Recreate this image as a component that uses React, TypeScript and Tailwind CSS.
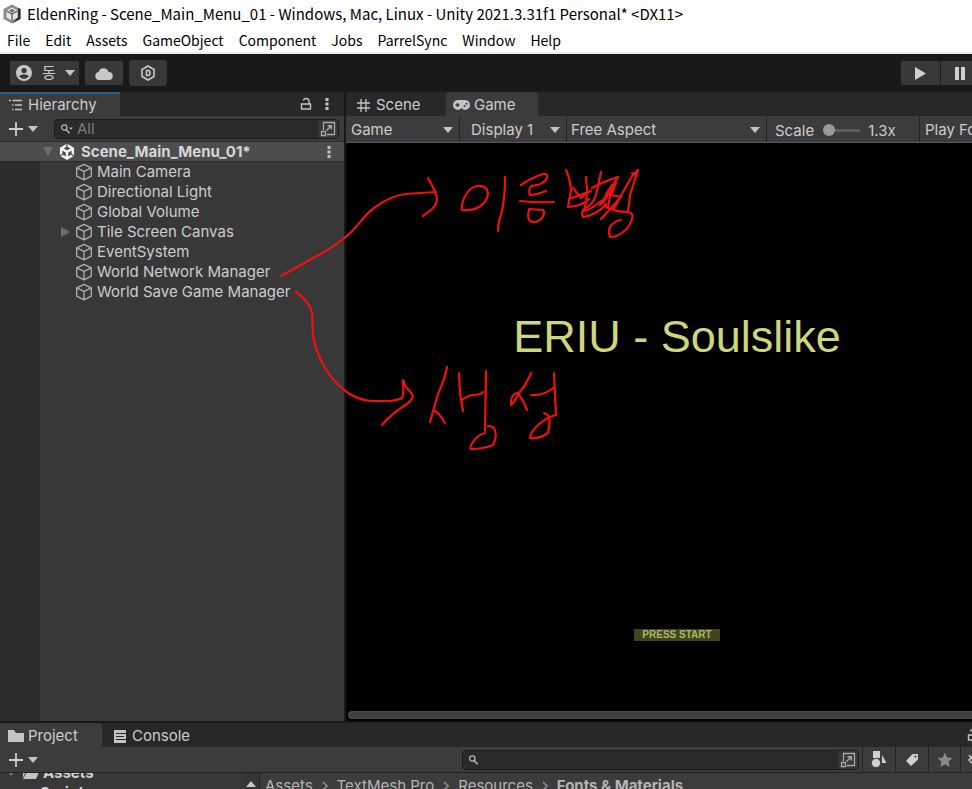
import type { ReactNode } from "react";
import { SiUnity } from "react-icons/si";

const menus = ["File", "Edit", "Assets", "GameObject", "Component", "Jobs", "ParrelSync", "Window", "Help"];

const objects = [
  { name: "Main Camera" },
  { name: "Directional Light" },
  { name: "Global Volume" },
  { name: "Tile Screen Canvas", children: true },
  { name: "EventSystem" },
  { name: "World Network Manager" },
  { name: "World Save Game Manager" },
];

const crumbs = ["Assets", "TextMesh Pro", "Resources"];

function Caret({ className = "" }: { className?: string }) {
  return (
    <svg viewBox="0 0 10 6" className={`h-[6px] w-[10px] shrink-0 fill-[#c4c4c4] ${className}`} aria-hidden="true">
      <path d="M0 0h10L5 6z" />
    </svg>
  );
}

function Dots() {
  return (
    <svg viewBox="0 0 4 14" className="h-[14px] w-1 fill-[#c4c4c4]" aria-hidden="true">
      <rect x="0.5" y="1" width="3" height="3" />
      <rect x="0.5" y="5.5" width="3" height="3" />
      <rect x="0.5" y="10" width="3" height="3" />
    </svg>
  );
}

function Lock() {
  return (
    <svg viewBox="0 0 12 14" className="h-[14px] w-3 shrink-0 fill-none stroke-[#c4c4c4]" strokeWidth="1.4" aria-hidden="true">
      <path d="M1.500 7h9v5h-9zM9 7V4.200Q9 1.500 6.300 1.500Q3.800 1.500 3.500 3.500" />
    </svg>
  );
}

function Plus() {
  return (
    <svg viewBox="0 0 16 16" className="size-4 stroke-[#cdcdcd]" strokeWidth="1.800" aria-hidden="true">
      <path d="M8 1v14M1 8h14" />
    </svg>
  );
}

function Popout() {
  return (
    <svg viewBox="0 0 16 16" className="size-4 fill-none stroke-[#a8a8a8]" strokeWidth="1.300" aria-hidden="true">
      <path d="M3.500 9V1.500h11v12H7M1.500 10.500h4v4h-4z" />
      <path d="M6.500 9.500 11 5M7.500 4.700h3.800v3.800" strokeWidth="1.500" />
    </svg>
  );
}

function Cube() {
  return (
    <svg viewBox="0 0 18 18" className="size-[18px] shrink-0 fill-none stroke-[#b0b0b0]" strokeWidth="1.300" strokeLinejoin="round" aria-hidden="true">
      <path d="M9 1.300 16.300 4.800v8.400L9 16.800 1.700 13.200V4.800zM1.700 4.800 9 8.300l7.300-3.500M9 8.300v8.500" />
    </svg>
  );
}

function Search({ menu = false }: { menu?: boolean }) {
  return (
    <svg viewBox="0 0 14 12" className="h-3 w-[14px] shrink-0 fill-none stroke-[#b4b4b4]" strokeWidth="1.300" aria-hidden="true">
      <circle cx="4.300" cy="4.500" r="2.700" />
      <path d="m6.300 6.700 3.300 3.600" strokeWidth="1.600" />
      {menu && <path d="M9 4.500h4l-2 2.300z" fill="#b4b4b4" stroke="none" />}
    </svg>
  );
}

function AddButton() {
  return (
    <button type="button" aria-label="Create" className="flex items-center gap-1">
      <Plus />
      <Caret />
    </button>
  );
}

function Tab({ active = false, className = "", children }: { active?: boolean; className?: string; children: ReactNode }) {
  return (
    <button
      type="button"
      role="tab"
      aria-selected={active}
      className={`flex h-full items-center ${active ? "bg-[#3c3c3c]" : ""} ${className}`}
    >
      {children}
    </button>
  );
}

function DropButton({ className = "", children }: { className?: string; children: ReactNode }) {
  return (
    <button type="button" className={`flex h-full shrink-0 items-center justify-between border-r border-[#232323] pt-0.5 ${className}`}>
      {children}
      <Caret />
    </button>
  );
}

function Hierarchy() {
  return (
    <section className="flex w-[344px] shrink-0 flex-col bg-[#383838]">
      <div role="tablist" className="flex h-6 shrink-0 items-center bg-[#282828]">
        <Tab active className="w-[120px] gap-1.5 border-t-2 border-[#2c5d87] pl-[9px]">
          <svg viewBox="0 0 13 12" className="h-3 w-[13px] stroke-[#c4c4c4]" strokeWidth="1.300" aria-hidden="true">
            <path d="M0 1.500h2M3.500 1.500H13M3 6h1.500M6 6h7M3 10.500h1.500M6 10.500h7" />
          </svg>
          Hierarchy
        </Tab>
        <div className="ml-auto flex items-center gap-[13px] pr-[15px]">
          <button type="button" aria-label="Lock"><Lock /></button>
          <button type="button" aria-label="Hierarchy options"><Dots /></button>
        </div>
      </div>
      <div className="flex h-[25px] shrink-0 items-center gap-4 bg-[#3c3c3c] pr-[5px] pl-2">
        <AddButton />
        <div className="flex h-5 flex-1 items-center overflow-hidden rounded border border-[#1c1c1c] bg-[#2a2a2a] pl-[5px]">
          <Search menu />
          <input aria-label="Search hierarchy" placeholder="All" className="min-w-0 flex-1 bg-transparent pl-[3px] outline-none placeholder:text-[#7d7d7d]" />
          <button type="button" aria-label="Open search" className="flex h-full w-5 items-center justify-center bg-[#373737]"><Popout /></button>
        </div>
      </div>
      <div className="flex h-[21px] shrink-0 items-center border-y border-[#2b2b2b] bg-[#4d4d4d] pr-[13px] pl-[43px] font-bold text-[#d6d6d6]">
        <svg viewBox="0 0 10 9" className="mr-1.5 h-[9px] w-[10px] fill-[#6e6e6e]" aria-hidden="true"><path d="M0 0h10L5 9z" /></svg>
        <SiUnity className="size-4 shrink-0 text-[#f0f0f0]" aria-hidden="true" />
        <span className="ml-1.5">Scene_Main_Menu_01*</span>
        <button type="button" aria-label="Scene options" className="ml-auto"><Dots /></button>
      </div>
      <div className="flex flex-1">
        <div className="w-10 shrink-0 bg-[#2d2d2d]" />
        <ul className="flex-1">
          {objects.map((o) => (
            <li key={o.name} className="flex h-5 items-center pl-[21px]">
              <svg viewBox="0 0 9 10" className={`mr-[5px] h-[10px] w-[9px] ${o.children ? "fill-[#6e6e6e]" : "fill-none"}`} aria-hidden="true"><path d="M0 0v10l9-5z" /></svg>
              <Cube />
              <span className="ml-1 whitespace-nowrap">{o.name}</span>
            </li>
          ))}
        </ul>
      </div>
    </section>
  );
}

function GameView() {
  return (
    <section className="flex min-w-0 flex-1 flex-col bg-black">
      <div role="tablist" className="flex h-6 shrink-0 items-center bg-[#282828]">
        <Tab className="w-[100px] gap-1.5 pt-0.5 pl-[11px]">
          <svg viewBox="0 0 13 13" className="size-[13px] stroke-[#c4c4c4]" strokeWidth="1.300" aria-hidden="true">
            <path d="M4 0v13M9 0v13M0 4h13M0 9h13" />
          </svg>
          Scene
        </Tab>
        <Tab active className="w-[92px] gap-1 rounded-t pt-0.5 pl-[7px]">
          <svg viewBox="0 0 17 10" className="h-[10px] w-[17px]" aria-hidden="true">
            <path d="M5 0h7a5 5 0 0 1 0 10Q10.500 10 9.500 8.500h-2Q6.500 10 5 10A5 5 0 0 1 5 0z" fill="#c4c4c4" />
            <path d="M2.500 5h4M4.500 3v4" stroke="#333" strokeWidth="1.300" />
            <circle cx="11.500" cy="6" r="1" fill="#333" />
            <circle cx="13.500" cy="3.800" r="1" fill="#333" />
          </svg>
          Game
        </Tab>
      </div>
      <div className="flex h-[27px] shrink-0 items-center overflow-hidden border-b border-[#4a5c6c] bg-[#3c3c3c] whitespace-nowrap">
        <DropButton className="w-[114px] pr-1.5 pl-[5px]">Game</DropButton>
        <DropButton className="w-[107px] pr-1.5 pl-[11px]">Display 1</DropButton>
        <DropButton className="w-[200px] pr-1.5 pl-1">Free Aspect</DropButton>
        <label className="flex h-full w-[153px] shrink-0 items-center border-r border-[#232323] pt-[3px] pl-2">
          Scale
          <input
            type="range"
            min="1"
            max="5"
            step="0.1"
            defaultValue="1"
            className="mr-2 ml-[9px] h-3 w-[37px] appearance-none bg-transparent [&::-webkit-slider-runnable-track]:h-[3px] [&::-webkit-slider-runnable-track]:bg-[#5e5e5e] [&::-webkit-slider-thumb]:-mt-[5px] [&::-webkit-slider-thumb]:size-3 [&::-webkit-slider-thumb]:appearance-none [&::-webkit-slider-thumb]:rounded-full [&::-webkit-slider-thumb]:bg-[#999]"
          />
          1.3x
        </label>
        <button type="button" className="h-full shrink-0 pt-0.5 pl-[5px]">Play Focused</button>
      </div>
      <div className="flex flex-1 flex-col items-center overflow-hidden font-['Liberation_Sans',Arial,sans-serif]">
        <h1 className="mt-[168px] ml-9 text-[45px] leading-[52px] whitespace-nowrap text-[#cdd67c]">ERIU - Soulslike</h1>
        <button type="button" className="mt-[266px] ml-9 h-3 w-[86px] bg-[#41451f] text-[10px] leading-3 font-bold whitespace-nowrap text-[#b0b764]">PRESS START</button>
      </div>
      <div className="h-[10px] shrink-0 pl-0.5">
        <div className="h-2 rounded-l-full border border-r-0 border-[#4a4a4a] bg-[#404040]" />
      </div>
    </section>
  );
}

function Project() {
  return (
    <section className="flex h-[67px] shrink-0 flex-col overflow-hidden border-t border-[#191919] bg-[#383838]">
      <div role="tablist" className="flex h-6 shrink-0 items-center bg-[#282828]">
        <Tab active className="w-[102px] gap-1 rounded-tr pt-0.5 pl-2">
          <svg viewBox="0 0 16 12" className="h-3 w-4 fill-[#c4c4c4]" aria-hidden="true"><path d="M0 0h6l2 3h8v9H0z" /></svg>
          Project
        </Tab>
        <Tab className="gap-1.5 pt-0.5 pl-3">
          <svg viewBox="0 0 12 13" className="h-[13px] w-3" aria-hidden="true">
            <path d="M0 0h12v13H0z" fill="#c4c4c4" />
            <path d="M2 3.500h10M2 6.500h8M2 9.500h10" stroke="#282828" strokeWidth="1.200" />
          </svg>
          Console
        </Tab>
        <button type="button" aria-label="Lock" className="ml-auto w-[5px] overflow-hidden"><Lock /></button>
      </div>
      <div className="flex h-[26px] shrink-0 items-center border-b border-[#232323] bg-[#3c3c3c] pl-2">
        <AddButton />
        <div className="ml-auto flex h-5 w-[397px] items-center overflow-hidden rounded border border-[#1c1c1c] bg-[#2a2a2a] pl-[5px]">
          <Search />
          <input aria-label="Search project" className="min-w-0 flex-1 bg-transparent outline-none" />
          <button type="button" aria-label="Open search" className="flex h-full w-5 items-center justify-center bg-[#373737]"><Popout /></button>
        </div>
        <div className="ml-[3px] flex h-full">
          <button type="button" aria-label="Filter by type" className="flex w-[33px] items-center justify-center border-l border-[#232323]">
            <svg viewBox="0 0 16 17" className="h-[17px] w-4 fill-[#d0d0d0]" aria-hidden="true"><path d="M2 0h7v7H2zM11 4l4.500 8H11z" /><circle cx="5" cy="12" r="4.600" stroke="#3c3c3c" strokeWidth="0.800" /></svg>
          </button>
          <button type="button" aria-label="Filter by label" className="flex w-[33px] items-center justify-center border-l border-[#232323]">
            <svg viewBox="0 0 14 14" className="size-[14px]" aria-hidden="true"><path d="m1 8 6-6.500Q7.500 1 8.500 1H12q1 0 1 1v3.500Q13 6.500 12.500 7L6 13z" fill="#d0d0d0" /><circle cx="10.500" cy="3.500" r="1.100" fill="#3c3c3c" /></svg>
          </button>
          <button type="button" aria-label="Favorites" className="flex w-8 items-center justify-center border-l border-[#232323]">
            <svg viewBox="0 0 16 16" className="size-4 fill-[#8a8a8a]" aria-hidden="true"><path d="m8 .500 2.200 5 5.300.5-4 3.600 1.200 5.400L8 12.200 3.300 15l1.200-5.400-4-3.600 5.300-.500z" /></svg>
          </button>
          <button type="button" aria-label="Hidden packages" className="flex w-3 items-center overflow-hidden border-l border-[#232323] pl-[7px]">
            <svg viewBox="0 0 16 12" className="h-3 w-4 shrink-0 fill-none stroke-[#c4c4c4]" strokeWidth="1.500" aria-hidden="true"><path d="M1 6q7-9 14 0-7 9-14 0zM1 1l10 11" /></svg>
          </button>
        </div>
      </div>
      <div className="flex min-h-0 flex-1">
        <div className="flex w-[242px] shrink-0 flex-col justify-end overflow-hidden font-bold text-[#d2d2d2]">
          <div className="-mb-[14px]">
            <div className="flex h-5 items-center pl-1.5">
              <Caret className="opacity-40" />
              <svg viewBox="0 0 17 12" className="mr-1 ml-1.5 h-3 w-[17px] fill-[#c4c4c4]" aria-hidden="true"><path d="M1 0h5l2 2h6v2H4L1 11zM5 5h12l-3 7H1z" /></svg>
              Assets
            </div>
            <div className="flex h-5 items-center pl-10">Scripts</div>
          </div>
        </div>
        <div className="flex w-[18px] shrink-0 justify-center border-r border-[#232323] bg-[#353535] pt-2">
          <svg viewBox="0 0 10 6" className="h-[6px] w-[10px] fill-[#c4c4c4]" aria-hidden="true"><path d="M0 6h10L5 0z" /></svg>
        </div>
        <nav aria-label="Folder path" className="flex h-[25px] flex-1 items-center gap-[9px] bg-[#3c3c3c] pl-[5px] text-[#b4b4b4]">
          {crumbs.map((c) => (
            <span key={c} className="flex items-center gap-[9px] whitespace-nowrap">
              <a href="#folder">{c}</a>
              <svg viewBox="0 0 6 10" className="h-[10px] w-[6px] fill-none stroke-[#8a8a8a]" strokeWidth="1.600" aria-hidden="true"><path d="m1 1 4 4-4 4" /></svg>
            </span>
          ))}
          <a href="#folder" className="font-bold whitespace-nowrap">Fonts &amp; Materials</a>
        </nav>
      </div>
    </section>
  );
}

function Annotations() {
  return (
    <svg viewBox="0 0 400 320" className="pointer-events-none absolute top-[150px] left-[270px] h-[320px] w-[400px] fill-none stroke-[#f01010]" strokeWidth="2.200" strokeLinecap="round" strokeLinejoin="round" role="img" aria-label="이름변경, 생성">
      <path d="M11 126 45 107Q66 96 79 84C91 73 94 65 104 58Q120 46 135 44Q150 43 166 42" />
      <path d="M158 28q5 9 7 14 5 10-3 17-5 4-9 7" />
      <path d="M207 36q-7 2-10 7-6 9-5 17 10 1 17-3 9-6 9-14-1-8-11-7M235 27q0 20-3 34-4 12-4 20" />
      <path d="M251 35q10-7 22-11 5-1 4 4-3 7-16 8-3 5-1 9 6 0 16-4M250 51q18 2 34 1M259 60q-2 7 1 11 6 3 11-2 5-6 2-9l-14-1" />
      <path d="M296 20q4 8 5 21l-3 16q14-1 21-8M316 27l1 14q0 10-3 20 8-2 17-10M303 38l8 10 6-6M299 49l22-8M331 22l-5 23q-3 10-12 14-3 4-1 8 14-2 23-13M322 38l10-5q9-4 16-6l-18 28M333 53l15-26M336 44l6-9-4 22M346 33l-5 12 10 2-20 22M343 60l19-34 6-6-8 25-2 17q-12 0-22-5M362 23l5 3" />
      <path d="M358 62q6 1 4 7-2 8-9 13-6 5-13 5-2-5 0-10 4-6 11-7" />
      <g transform="translate(0 100)">
        <path d="M26 42Q40 52 42 63L43 85Q45 100 55 118Q65 134 78 143Q89 150 101 151H120Q129 150 132 148Q134 146 133 130L136 137Q140 141 143 146Q142 151 134 156Q120 165 112 175" />
        <path d="M177 117q-2 12-9 27l-8 28M165 161q4 2 10 12M189 123l1 20 3 18M192 150q6-5 12-5t9-3M216 121l-1 60M215 183q-8 2-12 9-4 6-2 7 13 0 22-4 5-10 1-17-2-2-6-2" />
        <path d="M261 123q-5 12-12 20-5 10-8 12-1-10 6-12 4 2 10 17M261 145q13 1 22-7M284 123l2 42q-9 2-18 10-8 8-8 13 10 1 18-5 3-15 0-18l-4-2" />
      </g>
    </svg>
  );
}

export default function App() {
  return (
    <div className="relative flex min-h-screen flex-col overflow-hidden bg-[#191919] font-['Inter','Noto_Sans_CJK_KR',sans-serif] text-[15px] leading-5 text-[#cdcdcd]">
      <header className="border-b-2 border-[#ececec] bg-white font-['Noto_Sans_CJK_KR','Noto_Sans',sans-serif] text-black">
        <div className="flex h-7 items-center gap-1.5 pl-[3px] whitespace-nowrap">
          <svg viewBox="0 0 18 20" className="h-5 w-[18px]" aria-hidden="true">
            <path d="M9 .500 17.500 5v10L9 19.500.500 15V5z" fill="#8c8c8c" />
            <path d="M9 19.500 17.500 15V5L15 4v9.500z" fill="#2e2e2e" />
            <path d="m9 3.500 5.500 3v7L9 16.500l-5.500-3v-7z" fill="#e4e4e4" />
            <path d="M9 10v6.500M9 10 3.500 7M9 10l5.500-3" stroke="#555" strokeWidth="1.300" />
            <path d="m9 5 3 1.700L9 8.400 6 6.700z" fill="#666" />
          </svg>
          EldenRing - Scene_Main_Menu_01 - Windows, Mac, Linux - Unity 2021.3.31f1 Personal* &lt;DX11&gt;
        </div>
        <nav aria-label="Main menu" className="flex h-6 items-center gap-[15px] pl-[7px] text-sm">
          {menus.map((m) => (
            <button type="button" key={m}>{m}</button>
          ))}
        </nav>
      </header>
      <div className="flex h-[38px] shrink-0 items-center gap-1.5 overflow-hidden pl-[10px]">
        <button type="button" className="flex h-6 w-[69px] items-center bg-[#383838] pl-1.5">
          <svg viewBox="0 0 16 16" className="size-4" aria-hidden="true">
            <circle cx="8" cy="8" r="8" fill="#c8c8c8" />
            <circle cx="8" cy="5.500" r="2.600" fill="#383838" />
            <path d="M3 11q5-3.500 10 0-2 3-5 3t-5-3z" fill="#383838" />
          </svg>
          <span className="ml-2.5">동</span>
          <Caret className="ml-[9px]" />
        </button>
        <button type="button" aria-label="Cloud" className="flex h-6 w-[38px] items-center justify-center bg-[#383838]">
          <svg viewBox="0 0 18 13" className="h-[13px] w-[18px] fill-[#c8c8c8]" aria-hidden="true"><path d="M4 13a4 4 0 0 1-.500-7.900A5.200 5.200 0 0 1 13.500 5 4 4 0 0 1 14 13z" /></svg>
        </button>
        <button type="button" aria-label="Services" className="flex h-[26px] w-[38px] items-center justify-center rounded bg-[#383838]">
          <svg viewBox="0 0 16 16" className="size-4 fill-none stroke-[#c8c8c8]" strokeWidth="1.600" aria-hidden="true"><path d="m8 1 6 3.500v7L8 15l-6-3.500v-7zM6.500 5.500H8q2 0 2 2.500t-2 2.500H6.500z" /></svg>
        </button>
        <div className="ml-auto flex gap-px">
          <button type="button" aria-label="Play" className="flex h-6 w-[39px] items-center justify-center bg-[#383838]">
            <svg viewBox="0 0 11 13" className="h-[13px] w-[11px] fill-[#d0d0d0]" aria-hidden="true"><path d="M0 0v13l11-6.500z" /></svg>
          </button>
          <button type="button" aria-label="Pause" className="flex h-6 w-[31px] items-center bg-[#383838] pl-[14px]">
            <svg viewBox="0 0 10 13" className="h-[13px] w-[10px] fill-[#d0d0d0]" aria-hidden="true"><path d="M0 0h4v13H0zM6 0h4v13H6z" /></svg>
          </button>
        </div>
      </div>
      <main className="flex flex-1 gap-0.5">
        <Hierarchy />
        <GameView />
      </main>
      <div className="h-px shrink-0" />
      <Project />
      <Annotations />
    </div>
  );
}
